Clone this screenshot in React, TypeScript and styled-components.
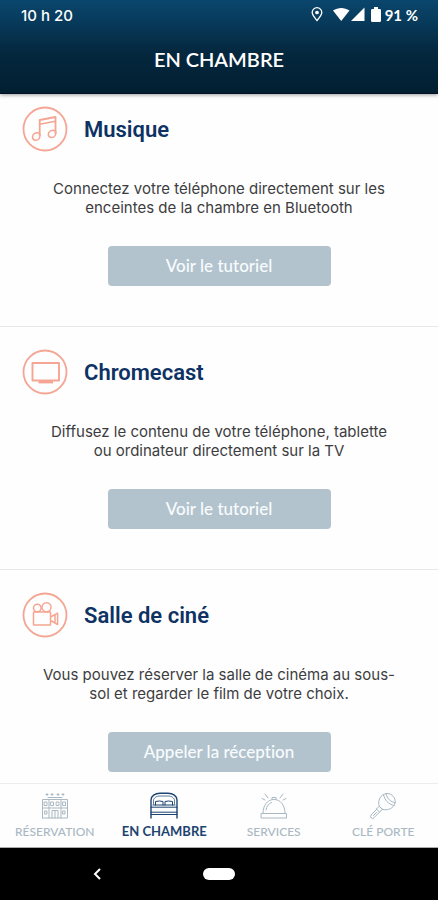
import React from 'react';
import styled, { createGlobalStyle } from 'styled-components';

const GlobalStyle = createGlobalStyle`
  *, *::before, *::after { box-sizing: border-box; }
  body {
    margin: 0;
    background: #fefefe;
    font-family: Inter, 'Liberation Sans', sans-serif;
    font-variant-ligatures: none;
  }
`;

const Screen = styled.div`
  display: flex;
  flex-direction: column;
  height: 100vh;
`;

const Header = styled.header`
  flex: none;
  color: #fff;
  background: linear-gradient(#0a466d 0%, #083c5e 20%, #04283f 55%, #021f31 100%);
  border-bottom: 1px solid #020f20;
  box-shadow: 0 1px 4px rgba(0, 0, 0, 0.4);
  z-index: 1;
`;

const StatusBar = styled.div`
  display: flex;
  align-items: center;
  justify-content: space-between;
  height: 30px;
  padding: 0 20px 0 21px;
  font-size: 15px;
  font-weight: 500;
`;

const StatusIcons = styled.div`
  display: flex;
  align-items: center;
  gap: 4px;
  font-family: Lato, sans-serif;
  font-weight: 700;
`;

const Title = styled.h1`
  margin: 0;
  padding: 17px 0 22px;
  font-size: 20px;
  line-height: 24px;
  font-weight: 600;
  font-family: Lato, sans-serif;
  text-align: center;
`;

const Content = styled.main`
  flex: 1;
  min-height: 0;
  overflow-y: auto;
  scrollbar-width: none;
`;

const Card = styled.section`
  padding: 22px 22px 40px;
  border-bottom: 1px solid #e8e8ea;

  &:first-child { padding-top: 12px; }
`;

const CardHead = styled.div`
  display: flex;
  align-items: center;
  gap: 16px;
`;

const CardTitle = styled.h2`
  margin: 0;
  padding-top: 2px;
  color: #0d3263;
  font: 600 22px/28px Roboto, sans-serif;
`;

const CardText = styled.p`
  max-width: 370px;
  margin: 27px auto 29px;
  color: #3d3d3f;
  font-size: 15px;
  line-height: 19px;
  text-align: center;
`;

const Action = styled.button`
  display: block;
  width: 100%;
  max-width: 223px;
  height: 40px;
  margin: 0 auto;
  padding: 0;
  border: 0;
  border-radius: 4px;
  background: #b3c3cd;
  color: #f8fcfe;
  font: 500 17px/20px Lato, sans-serif;
  font-variant-ligatures: none;
  cursor: pointer;
`;

const Tabs = styled.nav`
  flex: none;
  display: grid;
  grid-template-columns: repeat(4, 1fr);
  height: 65px;
  border-top: 1px solid #ececee;
  border-bottom: 1px solid #a9abac;
  background: #fefefe;
`;

const Tab = styled.a<{ $active?: boolean }>`
  display: flex;
  flex-direction: column;
  align-items: center;
  gap: ${p => (p.$active ? 3 : 5)}px;
  padding-top: 8px;
  color: ${p => (p.$active ? '#1c4470' : '#a9b8c2')};
  font: ${p => (p.$active ? '700 13px/16px' : '500 12px/14px')} Lato, sans-serif;
  text-decoration: none;
  white-space: nowrap;
`;

const SystemBar = styled.footer`
  flex: none;
  display: grid;
  grid-template-columns: 1fr auto 1fr;
  align-items: center;
  height: 52px;
  background: #000;
`;

const SystemButton = styled.button`
  display: flex;
  justify-self: start;
  margin-left: 92px;
  padding: 0;
  border: 0;
  background: none;
`;

const HomeButton = styled.button`
  width: 32px;
  height: 12px;
  padding: 0;
  border: 0;
  border-radius: 6px;
  background: #fff;
`;

function RoundIcon({ children }: { children: React.ReactNode }) {
  return (
    <svg width="46" height="46" viewBox="0 0 46 46" fill="none" stroke="#f5a593" strokeWidth="1.5" strokeLinejoin="round" aria-hidden="true">
      <circle cx="23" cy="23" r="21.5" strokeWidth="1.8" />
      {children}
    </svg>
  );
}

const MusicIcon = () => (
  <RoundIcon>
    <path d="M17.7 30V14L33.500 11V28" strokeWidth="1.8" />
    <path d="M17.7 18.300L33.500 15.300" strokeWidth="1.6" />
    <path d="M17.7 27.5C14 25.7 10.5 28 10.5 31C10.5 35 16 35.5 17.5 32C18 30.5 18 29 17.7 27.5Z" />
    <path d="M33.5 25C30 23 26.3 25.4 26.3 28.3C26.3 32 31.5 32.8 33.3 29.5C34 28 34 26.5 33.5 25Z" />
  </RoundIcon>
);

const TvIcon = () => (
  <RoundIcon>
    <rect x="10.5" y="14" width="26.5" height="17.5" strokeWidth="1.9" />
    <path d="M16.5 33.2H31" strokeWidth="2.4" />
  </RoundIcon>
);

const CameraIcon = () => (
  <RoundIcon>
    <rect x="11.5" y="20" width="17" height="13" rx="0.5" />
    <circle cx="15.3" cy="16" r="3.8" />
    <circle cx="24.5" cy="15.2" r="4.5" />
    <path d="M28.500 25L35.600 21.200V32.500L28.500 28.500M33 22.800V31" />
  </RoundIcon>
);

function TabIcon({ children }: { children: React.ReactNode }) {
  return (
    <svg width="28" height="28" viewBox="0 0 28 28" fill="none" stroke="currentColor" strokeLinecap="round" strokeLinejoin="round" aria-hidden="true">
      {children}
    </svg>
  );
}

const HotelIcon = () => (
  <TabIcon>
    <path d="M1.5 26V7.500H26.500V26H1.500M8 7.500V26M20 7.500V26" />
    <path d="M5 2.5h2M6 1.5v2M10 2.5h2M11 1.5v2M16 2.5h2M17 1.5v2M21 2.5h2M22 1.5v2M7 5.500H21" />
    <path d="M3.500 10h2.500v3.500h-2.500zM10 10h2.500v3.500h-2.500zM15.500 10h2.500v3.500h-2.500zM22 10h2.500v3.500h-2.500z" />
    <path d="M1.5 16H26.5M4 19h2v3h-2zM22 19h2v3h-2zM11 26V18.5H17V26M14 18.5V26" />
  </TabIcon>
);

const BedIcon = () => (
  <TabIcon>
    <path d="M1 26V8C1 4 5 1.3 10 1.3H18C23 1.3 27 4 27 8V26" strokeWidth="1.4" />
    <path d="M3.5 12V8.8C3.5 5.5 7 4 10 4H18C21 4 24.5 5.5 24.5 8.8V12" strokeWidth="0.7" />
    <path d="M5.5 13V9.5Q9.5 8.5 13 9.5V13M15 13V9.5Q18.5 8.5 22.5 9.5V13M3 13H25M1 15.2H27M1 20.2H27M1 22.5H27" />
  </TabIcon>
);

const BellIcon = () => (
  <TabIcon>
    <path d="M3 21.5C3 13 7.5 7.5 14 7.5S25 13 25 21.5M1.5 21.5H26.5V26H1.5Z" />
    <path d="M12 7.5V5.5H16V7.5M6 18C6.7 14 8.5 11.6 11.5 10.5" />
    <path d="M5 2L8 6M2 6.5L5 8M23 2L20 6M26 6.5L23 8" />
  </TabIcon>
);

const KeyIcon = () => (
  <TabIcon>
    <path d="M10.5 14.5C7.8 9 11.5 2 18 1.5C23 1.5 27 6 26 11C25 16 18.5 19.2 13.5 17.3Z" />
    <path d="M10.5 14.5L13.5 17.3L10.500 20L7.700 17.300ZM7.700 17.300L2 23Q1 25 2.300 26Q3.800 27.200 5.200 25.600L10.500 20" />
    <path d="M14.500 2.500C15.500 8 19.500 12.500 25.200 13.500M17 1.600C18 6.500 21.500 10 26.200 10.800M4.500 23.500L7.500 20.500" />
  </TabIcon>
);

const cards = [
  { title: 'Musique', Icon: MusicIcon, lines: ['Connectez votre téléphone directement sur les', 'enceintes de la chambre en Bluetooth'], action: 'Voir le tutoriel' },
  { title: 'Chromecast', Icon: TvIcon, lines: ['Diffusez le contenu de votre téléphone, tablette', 'ou ordinateur directement sur la TV'], action: 'Voir le tutoriel' },
  { title: 'Salle de ciné', Icon: CameraIcon, lines: ['Vous pouvez réserver la salle de cinéma au sous-', 'sol et regarder le film de votre choix.'], action: 'Appeler la réception' },
];

const tabs = [
  { label: 'RÉSERVATION', Icon: HotelIcon },
  { label: 'EN CHAMBRE', Icon: BedIcon, active: true },
  { label: 'SERVICES', Icon: BellIcon },
  { label: 'CLÉ PORTE', Icon: KeyIcon },
];

export default function App() {
  return (
    <Screen>
      <GlobalStyle />
      <Header>
        <StatusBar>
          <span>10 h 20</span>
          <StatusIcons>
            <svg width="12" height="16" viewBox="0 0 12 16" fill="none" stroke="#fff" strokeWidth="1.3" aria-hidden="true">
              <path d="M6 13.5C3 10 1.2 7.500 1.2 5.500A4.8 4.8 0 0 1 10.8 5.500C10.8 7.500 9 10 6 13.500Z" />
              <circle cx="6" cy="5.5" r="1.2" fill="#fff" />
            </svg>
            <svg width="40" height="16" viewBox="-6 0 40 16" fill="#fff" aria-hidden="true">
              <path d="M0 3.5C5 0 11.500 0 16.500 3.500L8.200 14Z" />
              <path d="M31.500 .5V14H18Z" />
            </svg>
            <svg width="10" height="16" viewBox="0 0 10 16" fill="#fff" aria-hidden="true">
              <path d="M3 0H7V2H8.500Q10 2 10 3.300V13.700Q10 15 8.500 15H1.500Q0 15 0 13.700V3.300Q0 2 1.500 2H3Z" />
            </svg>
            <span>91 %</span>
          </StatusIcons>
        </StatusBar>
        <Title>EN CHAMBRE</Title>
      </Header>
      <Content>
        {cards.map(({ title, Icon, lines, action }) => (
          <Card key={title}>
            <CardHead>
              <Icon />
              <CardTitle>{title}</CardTitle>
            </CardHead>
            <CardText>{lines[0]}<br />{lines[1]}</CardText>
            <Action type="button">{action}</Action>
          </Card>
        ))}
      </Content>
      <Tabs aria-label="Navigation principale">
        {tabs.map(({ label, Icon, active }) => (
          <Tab key={label} href="#" $active={active} aria-current={active ? 'page' : undefined}>
            <Icon />
            {label}
          </Tab>
        ))}
      </Tabs>
      <SystemBar>
        <SystemButton type="button" aria-label="Retour">
          <svg width="10" height="12" viewBox="0 0 10 12" fill="none" stroke="#fff" strokeWidth="2" aria-hidden="true">
            <path d="M8 1L3 6L8 11" />
          </svg>
        </SystemButton>
        <HomeButton type="button" aria-label="Accueil" />
      </SystemBar>
    </Screen>
  );
}
